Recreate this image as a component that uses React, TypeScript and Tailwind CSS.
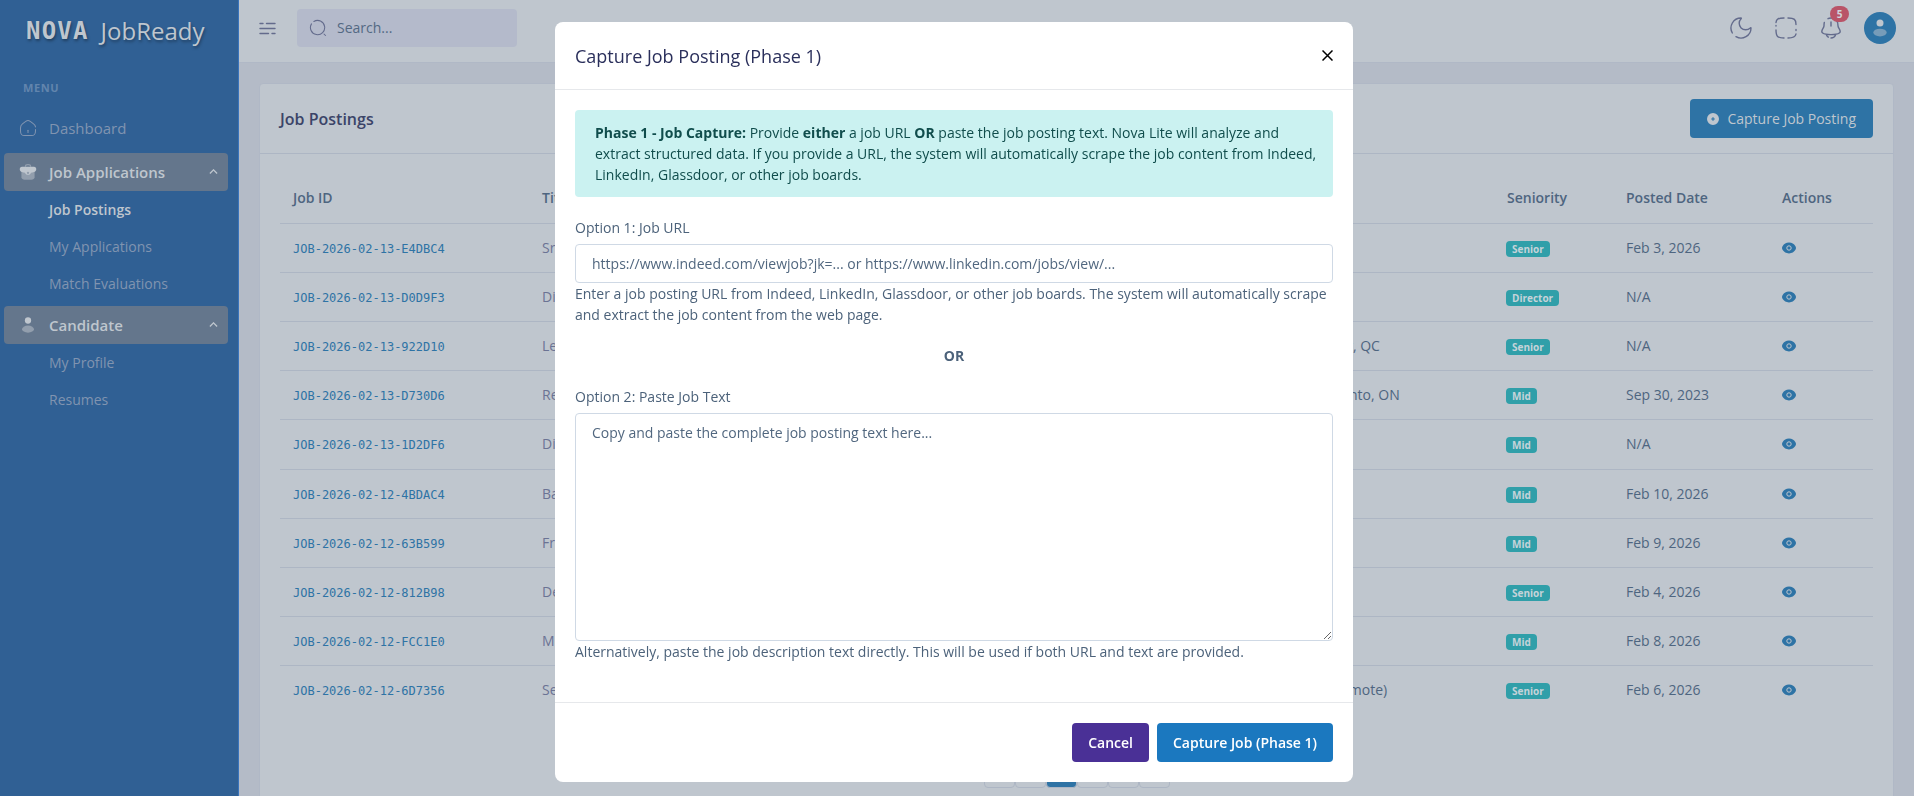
import { useState } from 'react';
import type { ReactNode } from 'react';

type Job = {
    id: string;
    title: string;
    company: string;
    location: string;
    seniority: string;
    posted: string;
};

const jobs: Job[] = [
    { id: 'JOB-2026-02-13-E4DBC4', title: 'Sr. Product Manager', company: 'Acme', location: 'Remote', seniority: 'Senior', posted: 'Feb 3, 2026' },
    { id: 'JOB-2026-02-13-D0D9F3', title: 'Director of Data', company: 'Acme', location: 'Remote', seniority: 'Director', posted: 'N/A' },
    { id: 'JOB-2026-02-13-922D10', title: 'Lead Developer', company: 'Acme', location: 'Saint-Laurent, QC', seniority: 'Senior', posted: 'N/A' },
    { id: 'JOB-2026-02-13-D730D6', title: 'React Developer', company: 'Acme', location: 'Greater Toronto, ON', seniority: 'Mid', posted: 'Sep 30, 2023' },
    { id: 'JOB-2026-02-13-1D2DF6', title: 'Digital Analyst', company: 'Acme', location: 'Remote', seniority: 'Mid', posted: 'N/A' },
    { id: 'JOB-2026-02-12-4BDAC4', title: 'Backend Developer', company: 'Acme', location: 'Remote', seniority: 'Mid', posted: 'Feb 10, 2026' },
    { id: 'JOB-2026-02-12-63B599', title: 'Frontend Developer', company: 'Acme', location: 'Remote', seniority: 'Mid', posted: 'Feb 9, 2026' },
    { id: 'JOB-2026-02-12-812B98', title: 'DevOps Engineer', company: 'Acme', location: 'Remote', seniority: 'Senior', posted: 'Feb 4, 2026' },
    { id: 'JOB-2026-02-12-FCC1E0', title: 'ML Engineer', company: 'Acme', location: 'Remote', seniority: 'Mid', posted: 'Feb 8, 2026' },
    { id: 'JOB-2026-02-12-6D7356', title: 'Senior Engineer', company: 'Acme', location: 'Montreal (Remote)', seniority: 'Senior', posted: 'Feb 6, 2026' },
];

function HomeIcon() {
    return (
        <svg viewBox="0 0 24 24" className="size-[18px]" fill="none" stroke="currentColor" strokeWidth="1.4" strokeLinecap="round">
            <path d="M22 10.5c-.2-2-.9-2.8-2.6-4L15 3.2C13.6 2.2 12.9 2 12 2s-1.6.2-3 1.2L4.6 6.400C2.400 8 2 9 2 12v3.500C2 20.500 3.300 22 7.500 22h9c4.200 0 5.500-1.500 5.500-6.500V14" />
            <path d="M12 15v3" />
        </svg>
    );
}

function BriefcaseIcon() {
    return (
        <svg viewBox="0 0 24 24" className="size-[18px]" fill="currentColor">
            <path d="M8.500 5V4.500C8.500 3 9.500 2.200 12 2.200s3.500.8 3.500 2.300V5" fill="none" stroke="currentColor" strokeWidth="1.500" opacity=".5" />
            <path d="M3.200 10v9c.2 2.200 1.800 3.300 4.300 3.300h9c2.500 0 4.100-1.100 4.300-3.300v-9z" opacity=".5" />
            <path fillRule="evenodd" d="M4 5h16c2 0 3 1.200 3 3.200 0 2-1.200 3.300-3 3.900-1.300.4-2.700.7-4 .9-.4 1.600-1.900 2.800-4 2.800s-3.600-1.200-4-2.800c-1.300-.2-2.700-.5-4-.9-1.800-.6-3-1.900-3-3.900C1 6.200 2 5 4 5zm8 6.500a1.600 1.600 0 1 0 0 3.200 1.600 1.600 0 0 0 0-3.200z" />
        </svg>
    );
}

function UserIcon({ className }: { className: string }) {
    return (
        <svg viewBox="0 0 24 24" className={className} fill="currentColor">
            <circle cx="12" cy="6" r="4.200" />
            <ellipse cx="12" cy="17.500" rx="8" ry="4.700" opacity=".5" />
        </svg>
    );
}

function ChevronUp() {
    return (
        <svg viewBox="0 0 10 6" className="w-[9px]" fill="none" stroke="currentColor" strokeWidth="1.500">
            <path d="M1 5l4-4 4 4" />
        </svg>
    );
}

function MenuIcon() {
    return (
        <svg viewBox="0 0 17 13" className="w-[17px]" fill="none" stroke="currentColor" strokeWidth="1.400" strokeLinecap="round">
            <path d="M1 1.500h3M7.500 1.500H16M1 6.500h15M1 11.500h8.500M13 11.500h3" />
        </svg>
    );
}

function SearchIcon() {
    return (
        <svg viewBox="0 0 24 24" className="size-[18px] shrink-0" fill="none" stroke="currentColor" strokeWidth="1.400" strokeLinecap="round">
            <path d="M6.500 3.300A9.500 9.500 0 1 1 3.300 6.500M20 20l2 2" />
        </svg>
    );
}

function MoonIcon() {
    return (
        <svg viewBox="0 0 24 24" className="size-6" fill="none" stroke="currentColor" strokeWidth="1.400" strokeLinecap="round">
            <path d="M7 20.660A10 10 0 0 0 22 12c0-.46-.5-.5-.74-.1A6 6 0 1 1 12.100 2.740c.4-.24.36-.74-.1-.74A10 10 0 0 0 3.340 17" />
        </svg>
    );
}

function FullscreenIcon() {
    return (
        <svg viewBox="0 0 24 24" className="size-6" fill="none" stroke="currentColor" strokeWidth="1.400" strokeLinecap="round">
            <path d="M2 6.500C2.300 3.300 3.600 2.100 10 2M14 2c6.400.1 8 1.500 8 6.500M22 13.500v1M22 18c-.5 3-2.500 4-8 4M10 22c-6.500-.1-8-1.500-8-8M2 10v-.5" />
        </svg>
    );
}

function BellIcon() {
    return (
        <svg viewBox="0 0 24 24" className="size-6" fill="none" stroke="currentColor" strokeWidth="1.400" strokeLinecap="round">
            <path d="M5.300 6.500c-.3 1-.3 2-.3 3.200 0 1-.4 1.700-1 2.600-1 1.600-2.200 3.300-.3 4.700 1.300 1 4.300 1.600 8.300 1.600s7-.6 8.300-1.600c1.900-1.400.7-3.100-.3-4.700-.6-.9-1-1.600-1-2.600C19 5 16.500 2 12 2c-1.200 0-2.200.2-3 .7M12 6v4" />
            <path d="M7.500 19c.4 1 1 1.700 1.800 2.200M16.500 19c-.7 1.900-2.400 3-4.500 3" />
        </svg>
    );
}

function PlusCircleIcon() {
    return (
        <svg viewBox="0 0 12 12" className="w-3" fill="currentColor">
            <path fillRule="evenodd" d="M6 0a6 6 0 1 1 0 12A6 6 0 0 1 6 0zm-.6 4.200v1.200H4.200v1.200h1.200v1.200h1.200V6.600h1.200V5.400H6.600V4.200z" />
        </svg>
    );
}

function EyeIcon() {
    return (
        <svg viewBox="0 0 14 12" className="w-[14px]" fill="currentColor">
            <path d="M7 .5c3 0 5 1.600 6.300 3.400.9 1.200.9 3 0 4.200C12 9.900 10 11.500 7 11.500S2 9.900.7 8.100c-.9-1.200-.9-3 0-4.200C2 2.100 4 .5 7 .5z" />
            <circle cx="7" cy="6" r="2.200" fill="none" stroke="#bfc6ce" strokeWidth="1" />
        </svg>
    );
}

function MenuGroup({ icon, label, children }: { icon: ReactNode; label: string; children: ReactNode }) {
    return (
        <li>
            <button type="button" className="flex h-[38px] w-full items-center rounded bg-[#64768c] pl-[15px] pr-2.5 text-[15px] font-semibold text-[#bfc6ce]">
                {icon}
                <span className="ml-3 flex-1 text-left">{label}</span>
                <ChevronUp />
            </button>
            <ul className="pb-1">{children}</ul>
        </li>
    );
}

function SubItem({ label, active = false }: { label: string; active?: boolean }) {
    return (
        <li>
            <a href="#" className={`flex h-[37px] items-center pl-[45px] text-sm ${active ? 'font-semibold text-[#bfc6ce]' : 'font-medium text-[#8094b0]'}`}>
                {label}
            </a>
        </li>
    );
}

function Sidebar() {
    return (
        <aside className="w-[239px] shrink-0 border-r border-[#3a74bb] bg-[#306094] pr-2.5 pl-1">
            <div className="flex h-[62px] items-center gap-3 pl-[22px] text-2xl text-[#bfc6ce] [text-shadow:1px_2px_3px_rgba(0,0,0,0.35)]">
                <span className="font-['DejaVu_Sans_Mono'] font-bold tracking-wider">NOVA</span>
                <span className="font-medium">JobReady</span>
            </div>
            <p className="mt-[15px] pl-[19px] text-[11px] leading-[22px] font-bold tracking-wider text-[#6285ad]">MENU</p>
            <nav className="mt-2.5">
                <ul>
                    <li className="mb-1.5">
                        <a href="#" className="flex h-[38px] items-center gap-3 pl-[15px] text-[15px] text-[#8094b0]">
                            <HomeIcon />
                            Dashboard
                        </a>
                    </li>
                    <MenuGroup icon={<BriefcaseIcon />} label="Job Applications">
                        <SubItem label="Job Postings" active />
                        <SubItem label="My Applications" />
                        <SubItem label="Match Evaluations" />
                    </MenuGroup>
                    <MenuGroup icon={<UserIcon className="size-[18px]" />} label="Candidate">
                        <SubItem label="My Profile" />
                        <SubItem label="Resumes" />
                    </MenuGroup>
                </ul>
            </nav>
        </aside>
    );
}

function Topbar() {
    return (
        <header className="flex h-[63px] shrink-0 items-center border-b border-[#b0b8c6] bg-[#bfc6ce] pr-[18px] pb-1.5 pl-5 text-[#636b8c]">
            <button type="button" aria-label="Toggle menu" className="mr-[21px]">
                <MenuIcon />
            </button>
            <label className="flex h-[38px] w-[220px] items-center gap-2.5 rounded bg-[#b4bacb] px-3">
                <SearchIcon />
                <input type="search" placeholder="Search..." aria-label="Search" className="w-full bg-transparent text-sm outline-none placeholder:text-[#536983]" />
            </label>
            <div className="ml-auto flex items-center gap-[21px]">
                <button type="button" aria-label="Dark mode"><MoonIcon /></button>
                <button type="button" aria-label="Fullscreen"><FullscreenIcon /></button>
                <button type="button" aria-label="Notifications" className="relative">
                    <BellIcon />
                    <span className="absolute -top-2.5 left-[11px] flex h-4 w-[19px] items-center justify-center rounded-full bg-[#b95468] text-[10px] font-bold text-[#cfd4dc]">5</span>
                </button>
                <button type="button" aria-label="Account" className="flex size-8 items-center justify-center rounded-full bg-[#2e73a5] text-[#bfc6ce]">
                    <UserIcon className="size-5" />
                </button>
            </div>
        </header>
    );
}

function JobTable() {
    return (
        <table className="h-[540px] w-full table-fixed text-left text-sm text-[#4e6580]">
            <colgroup>
                <col className="w-[249px]" />
                <col />
                <col className="w-[235px]" />
                <col className="w-[242px]" />
                <col className="w-[119px]" />
                <col className="w-[156px]" />
                <col className="w-[104px]" />
            </colgroup>
            <thead>
                <tr className="h-[49px] border-b border-[#adb6c4]">
                    {['Job ID', 'Title', 'Company', 'Location', 'Seniority', 'Posted Date', 'Actions'].map((h) => (
                        <th key={h} className="px-[13px] font-semibold">{h}</th>
                    ))}
                </tr>
            </thead>
            <tbody>
                {jobs.map((job) => (
                    <tr key={job.id} className="border-b border-[#adb6c4] whitespace-nowrap last:border-b-0">
                        <td className="px-[13px]">
                            <a href="#" className="font-['DejaVu_Sans_Mono'] text-xs text-[#2e73a5]">{job.id}</a>
                        </td>
                        <td className="px-[13px] text-[#6b7394]">{job.title}</td>
                        <td className="px-[13px]">{job.company}</td>
                        <td className="px-[13px]">{job.location}</td>
                        <td className="px-3">
                            <span className="inline-block rounded bg-[#309fa9] px-1.5 text-[10px] leading-4 font-bold text-[#c5d3d9]">{job.seniority}</span>
                        </td>
                        <td className="px-[13px]">{job.posted}</td>
                        <td className="px-[13px]">
                            <button type="button" aria-label={`View ${job.id}`} className="block text-[#2e73a5]">
                                <EyeIcon />
                            </button>
                        </td>
                    </tr>
                ))}
            </tbody>
        </table>
    );
}

function Pagination() {
    return (
        <nav className="mt-[42px] flex justify-center text-sm text-[#4e6580]">
            {['«', '1', '2', '3', '4', '»'].map((p) => (
                <button
                    key={p}
                    type="button"
                    className={`h-8 w-[31px] rounded border border-[#adb6c4] ${p === '2' ? 'bg-[#2e73a5] text-[#bfc6ce]' : ''}`}
                >
                    {p}
                </button>
            ))}
        </nav>
    );
}

function CaptureModal() {
    const [url, setUrl] = useState('');
    const [text, setText] = useState('');
    const field = 'block w-full rounded border border-[#cfd9e5] bg-white px-4 py-2 text-sm leading-[21px] outline-none placeholder:text-[#51677f]';

    return (
        <div className="fixed inset-0 flex items-start justify-center pt-[22px] pr-1.5">
            <div role="dialog" aria-modal="true" aria-labelledby="capture-title" className="w-full max-w-[798px] rounded-lg bg-white text-sm leading-[21px] text-[#4c627a]">
                <div className="flex h-[68px] items-center justify-between border-b border-[#e6e8eb] px-5">
                    <h5 id="capture-title" className="text-lg leading-6 font-medium text-[#2a2f5b]">Capture Job Posting (Phase 1)</h5>
                    <button type="button" aria-label="Close" className="text-black">
                        <svg viewBox="0 0 11 11" className="w-[11px]" fill="none" stroke="currentColor" strokeWidth="1.500">
                            <path d="M.5.5l10 10M10.500.5l-10 10" />
                        </svg>
                    </button>
                </div>

                <form className="p-5">
                    <div className="mb-5 rounded bg-[#cbf2f1] py-3 pr-4 pl-5 text-[#104d4c]">
                        <b>Phase 1 - Job Capture:</b> Provide <b>either</b> a job URL <b>OR</b> paste the job posting text. Nova Lite will analyze and
                        extract structured data. If you provide a URL, the system will automatically scrape the job content from Indeed,
                        LinkedIn, Glassdoor, or other job boards.
                    </div>

                    <label htmlFor="job-url" className="mb-1.5 block font-medium">Option 1: Job URL</label>
                    <input
                        id="job-url"
                        type="url"
                        value={url}
                        onChange={(e) => setUrl(e.target.value)}
                        placeholder="https://www.indeed.com/viewjob?jk=... or https://www.linkedin.com/jobs/view/..."
                        className={field}
                    />
                    <p>
                        Enter a job posting URL from Indeed, LinkedIn, Glassdoor, or other job boards. The system will automatically scrape
                        and extract the job content from the web page.
                    </p>

                    <p className="my-5 text-center font-bold">OR</p>

                    <label htmlFor="job-text" className="mb-1.5 block font-medium">Option 2: Paste Job Text</label>
                    <textarea
                        id="job-text"
                        rows={10}
                        value={text}
                        onChange={(e) => setText(e.target.value)}
                        placeholder="Copy and paste the complete job posting text here..."
                        className={field}
                    />
                    <p className="mb-5">Alternatively, paste the job description text directly. This will be used if both URL and text are provided.</p>
                </form>

                <div className="flex justify-end gap-2 border-t border-[#e6e8eb] p-5 font-semibold text-white">
                    <button type="button" className="h-[39px] rounded bg-[#4a3096] px-4">Cancel</button>
                    <button type="button" className="h-[39px] rounded bg-[#1b78bf] px-4">Capture Job (Phase 1)</button>
                </div>
            </div>
        </div>
    );
}

export default function App() {
    return (
        <div className="flex h-screen overflow-hidden bg-[#b4bbc7] font-['Open_Sans',sans-serif]">
            <Sidebar />
            <div className="flex min-w-0 flex-1 flex-col">
                <Topbar />
                <main className="p-5">
                    <section className="rounded border border-[#b0b8c6] bg-[#bfc6ce]">
                        <div className="flex h-[70px] items-center justify-between border-b border-[#adb6c4] px-5">
                            <h1 className="text-base font-semibold text-[#3b4468]">Job Postings</h1>
                            <button type="button" className="flex h-[39px] items-center gap-2 rounded bg-[#2e73a5] px-[17px] text-sm font-medium text-[#bfc6ce]">
                                <PlusCircleIcon />
                                Capture Job Posting
                            </button>
                        </div>
                        <div className="px-5 pt-5 pb-8">
                            <JobTable />
                            <Pagination />
                        </div>
                    </section>
                </main>
            </div>
            <CaptureModal />
        </div>
    );
}
